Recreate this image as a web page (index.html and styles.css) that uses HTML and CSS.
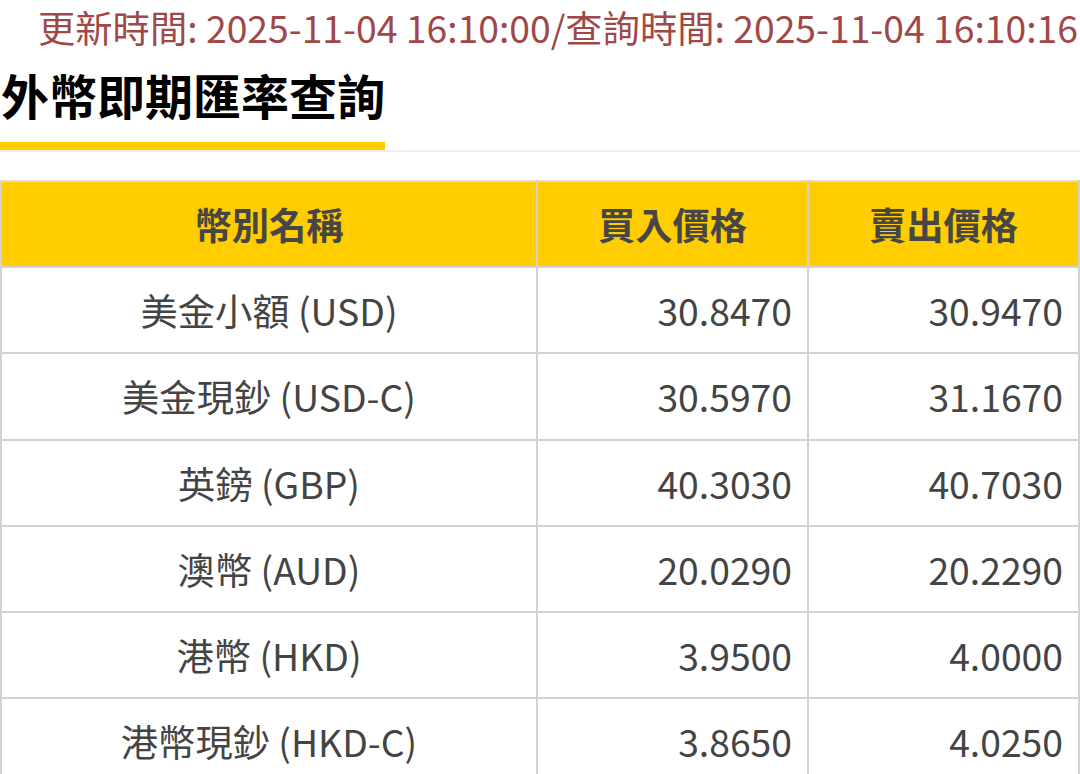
FILE: index.html
```html
<!DOCTYPE html>
<html lang="zh-Hant">
<head>
<meta charset="utf-8">
<title>外幣即期匯率查詢</title>
<link rel="stylesheet" href="styles.css">
</head>
<body>
<div class="page">
  <div class="timestamp">更新時間: 2025-11-04 16:10:00/查詢時間: 2025-11-04 16:10:16</div>
  <div class="title-bar">
    <h1 class="title">外幣即期匯率查詢</h1>
  </div>
  <table class="rates">
    <thead>
      <tr>
        <th class="col-name">幣別名稱</th>
        <th class="col-price">買入價格</th>
        <th class="col-price">賣出價格</th>
      </tr>
    </thead>
    <tbody>
      <tr><td class="name">美金小額 (USD)</td><td class="num">30.8470</td><td class="num">30.9470</td></tr>
      <tr><td class="name">美金現鈔 (USD-C)</td><td class="num">30.5970</td><td class="num">31.1670</td></tr>
      <tr><td class="name">英鎊 (GBP)</td><td class="num">40.3030</td><td class="num">40.7030</td></tr>
      <tr><td class="name">澳幣 (AUD)</td><td class="num">20.0290</td><td class="num">20.2290</td></tr>
      <tr><td class="name">港幣 (HKD)</td><td class="num">3.9500</td><td class="num">4.0000</td></tr>
      <tr><td class="name">港幣現鈔 (HKD-C)</td><td class="num">3.8650</td><td class="num">4.0250</td></tr>
    </tbody>
  </table>
</div>
</body>
</html>
```

FILE: styles.css
```css
* { box-sizing: border-box; }
html, body {
  margin: 0;
  padding: 0;
  background: #ffffff;
}
body {
  font-family: "Noto Sans CJK TC", "Noto Sans CJK SC", sans-serif;
  color: #444444;
}
.page {
  width: 1080px;
}
.timestamp {
  font-size: 37.3px;
  line-height: 54px;
  height: 56px;
  text-align: right;
  color: #a04848;
  padding-right: 2px;
  white-space: nowrap;
}
.title-bar {
  display: flex;
  border-bottom: 2px solid #eeeeee;
  margin-bottom: 28px;
}
.title {
  margin: 0;
  width: 385px;
  font-size: 48px;
  line-height: 76px;
  padding: 0 0 10px 1px;
  font-weight: 700;
  color: #000000;
  border-bottom: 8px solid #ffcd00;
  white-space: nowrap;
}
.rates {
  width: 1080px;
  border-collapse: collapse;
  table-layout: fixed;
  border: 2px solid #d2d2d2;
}
.rates th,
.rates td {
  border: 2px solid #d2d2d2;
  font-size: 37.3px;
  padding: 0;
}
.rates th {
  background: #ffcd00;
  color: #464646;
  font-weight: 700;
  height: 86px;
  text-align: center;
  border-top-color: #dcdcdc;
}
.col-name { width: 536px; }
.col-price { width: 271px; }
.rates td {
  height: 86.25px;
  color: #444444;
}
.rates td.name {
  text-align: center;
}
.rates td.num {
  text-align: right;
  padding-right: 15px;
}
```
